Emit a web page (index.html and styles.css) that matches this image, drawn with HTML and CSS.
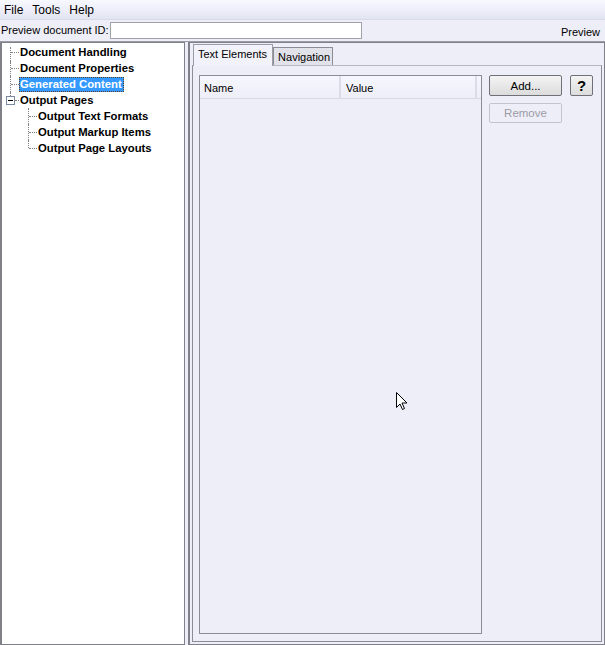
FILE: index.html
```html
<!DOCTYPE html>
<html lang="en">
<head>
    <meta charset="UTF-8">
    <title>Preview</title>
    <link rel="stylesheet" href="styles.css">
</head>
<body>
    <div class="window">
        <!-- menu -->
        <div class="menubar">
            <span class="menu-item">File</span>
            <span class="menu-item">Tools</span>
            <span class="menu-item">Help</span>
        </div>

        <!-- id row -->
        <div class="idbar">
            <label class="id-label">Preview document ID:</label>
            <input class="id-input" type="text">
            <span class="id-preview">Preview</span>
        </div>

        <div class="split">
            <!-- tree -->
            <div class="tree">
                <div class="node lvl1 line-mid"><span class="label">Document Handling</span></div>
                <div class="node lvl1 line-mid"><span class="label">Document Properties</span></div>
                <div class="node lvl1 line-mid"><span class="label selected">Generated Content</span></div>
                <div class="node lvl1 expander">
                    <span class="box"></span>
                    <span class="label">Output Pages</span>
                </div>
                <div class="node lvl2 line-mid"><span class="label">Output Text Formats</span></div>
                <div class="node lvl2 line-mid"><span class="label">Output Markup Items</span></div>
                <div class="node lvl2 line-end"><span class="label">Output Page Layouts</span></div>
            </div>

            <div class="divider"></div>

            <!-- right side -->
            <div class="content">
                <div class="tabs">
                    <div class="tab active">Text Elements</div>
                    <div class="tab">Navigation</div>
                </div>
                <div class="tab-panel">
                    <div class="table">
                        <div class="table-head">
                            <div class="col col-name">Name</div>
                            <div class="col col-value">Value</div>
                        </div>
                    </div>
                    <div class="actions">
                        <div class="action-row">
                            <button class="btn btn-add">Add...</button>
                            <button class="btn btn-help">?</button>
                        </div>
                        <button class="btn btn-remove" disabled>Remove</button>
                    </div>
                </div>
            </div>
        </div>

        <svg class="cursor" width="12" height="19" viewBox="0 0 12 19">
            <path d="M0.5 0.5 L0.5 15.5 L4 12 L6.5 17.5 L8.5 16.5 L6 11 L11 11 Z" fill="#fff" stroke="#000" stroke-width="1"/>
        </svg>
    </div>
</body>
</html>
```

FILE: styles.css
```css
/* base */
body {
    margin: 0;
    padding: 0;
    font-family: "Liberation Sans", Arial, sans-serif;
    font-size: 11px;
    color: #000;
    background: #eeeef8;
}

.window {
    position: relative;
    width: 605px;
    height: 645px;
    display: flex;
    flex-direction: column;
    overflow: hidden;
}

/* menu bar */
.menubar {
    height: 19px;
    display: flex;
    align-items: center;
    padding-left: 4px;
    background: linear-gradient(#f8f8ff, #e2e4f2);
    border-bottom: 1px solid #d8dae8;
    font-size: 12px;
}

.menu-item {
    margin-right: 9px;
}

/* id row */
.idbar {
    height: 21px;
    display: flex;
    align-items: center;
    padding: 0 5px 0 1px;
}

.id-label {
    margin-right: 1px;
    margin-top: -1px;
}

.id-input {
    width: 250px;
    height: 15px;
    padding: 0;
    border: 1px solid #a0a0a8;
    background: #fff;
}

.id-preview {
    margin-left: auto;
    margin-top: 2px;
}

/* split area */
.split {
    flex: 1;
    display: flex;
    border-top: 1px solid #9c9ca4;
}

.tree {
    width: 182px;
    background: #fff;
    border: 1px solid #808088;
    border-left-width: 2px;
    padding-top: 1px;
    font-weight: bold;
    font-size: 11.3px;
}

.divider {
    width: 3px;
    background: #eeeef8;
}

/* tree nodes */
.node {
    position: relative;
    height: 16px;
    display: flex;
    align-items: center;
}

.lvl1 {
    padding-left: 17px;
}

.lvl2 {
    padding-left: 35px;
}

.label {
    padding: 0 1px 0 0;
    line-height: 13px;
    border: 1px dotted transparent;
}

.label.selected {
    background: #3399ff;
    color: #fff;
    border-color: #604020;
}

.line-mid::before,
.line-end::before {
    content: "";
    position: absolute;
    top: 0;
    height: 100%;
    border-left: 1px dotted #808080;
}

.line-end::before {
    height: 8px;
}

.line-mid::after,
.line-end::after {
    content: "";
    position: absolute;
    top: 8px;
    border-top: 1px dotted #808080;
}

.lvl1::before {
    left: 8px;
}

.lvl1::after {
    left: 9px;
    width: 8px;
}

.lvl2::before {
    left: 26px;
}

.lvl2::after {
    left: 27px;
    width: 8px;
}

.node.lvl1:first-child::before {
    top: 3px;
}

.expander .box {
    position: absolute;
    left: 4px;
    top: 4px;
    width: 7px;
    height: 7px;
    border: 1px solid #7a8aa0;
    background: #fff;
}

.expander .box::after {
    content: "";
    position: absolute;
    left: 1px;
    top: 3px;
    width: 5px;
    border-top: 1px solid #000;
}

.expander::before {
    content: "";
    position: absolute;
    left: 8px;
    top: 0;
    height: 4px;
    border-left: 1px dotted #808080;
}

.expander::after {
    content: "";
    position: absolute;
    left: 13px;
    top: 8px;
    width: 4px;
    border-top: 1px dotted #808080;
}

/* right side */
.content {
    flex: 1;
    display: flex;
    flex-direction: column;
    border: 1px solid #808088;
    border-left-width: 2px;
    padding: 0 2px 2px 2px;
}

.tabs {
    display: flex;
    align-items: flex-end;
    height: 22px;
    padding-left: 1px;
}

.tab {
    height: 17px;
    padding: 0 2px 0 4px;
    border: 1px solid #8c8c94;
    border-bottom: none;
    background: #e2e2ea;
    line-height: 18px;
}

.tab.active {
    height: 21px;
    padding: 0 5px 0 4px;
    background: #f2f2fa;
    border-color: #9c9ca4;
    line-height: 18px;
    margin-bottom: -1px;
    position: relative;
    z-index: 1;
}

.tab-panel {
    flex: 1;
    display: flex;
    border: 1px solid #8c8c94;
    border-top-color: #b8b8c0;
    padding: 9px 7px 7px 6px;
}

.table {
    width: 281px;
    border: 1px solid #8c8c94;
    background: #eeeef8;
}

.table-head {
    display: flex;
    height: 22px;
    background: linear-gradient(#f6f6fe, #eeeef8);
    border-bottom: 1px solid #dadae4;
}

.col {
    padding: 6px 4px 0 4px;
}

.col-name {
    width: 131px;
    border-right: 2px solid #dcdce6;
}

.col-value {
    flex: 1;
    padding-left: 5px;
    margin-right: 4px;
    border-right: 2px solid #dcdce6;
}

/* buttons */
.actions {
    margin-left: 7px;
    display: flex;
    flex-direction: column;
}

.action-row {
    display: flex;
}

.btn {
    font-family: "Liberation Sans", Arial, sans-serif;
    font-size: 11.5px;
    width: 73px;
    height: 21px;
    padding: 0;
    border: 1px solid #707078;
    border-radius: 2px;
    background: linear-gradient(#f4f4f4, #dcdcdc);
    color: #000;
}

.btn-help {
    width: 23px;
    margin-left: 8px;
    font-weight: bold;
    font-size: 15px;
}

.btn-remove {
    margin-top: 7px;
    height: 20px;
    border-color: #c4c4cc;
    background: #eeeef8;
    color: #9c9ca4;
}

.cursor {
    position: absolute;
    left: 396px;
    top: 392px;
}
```
